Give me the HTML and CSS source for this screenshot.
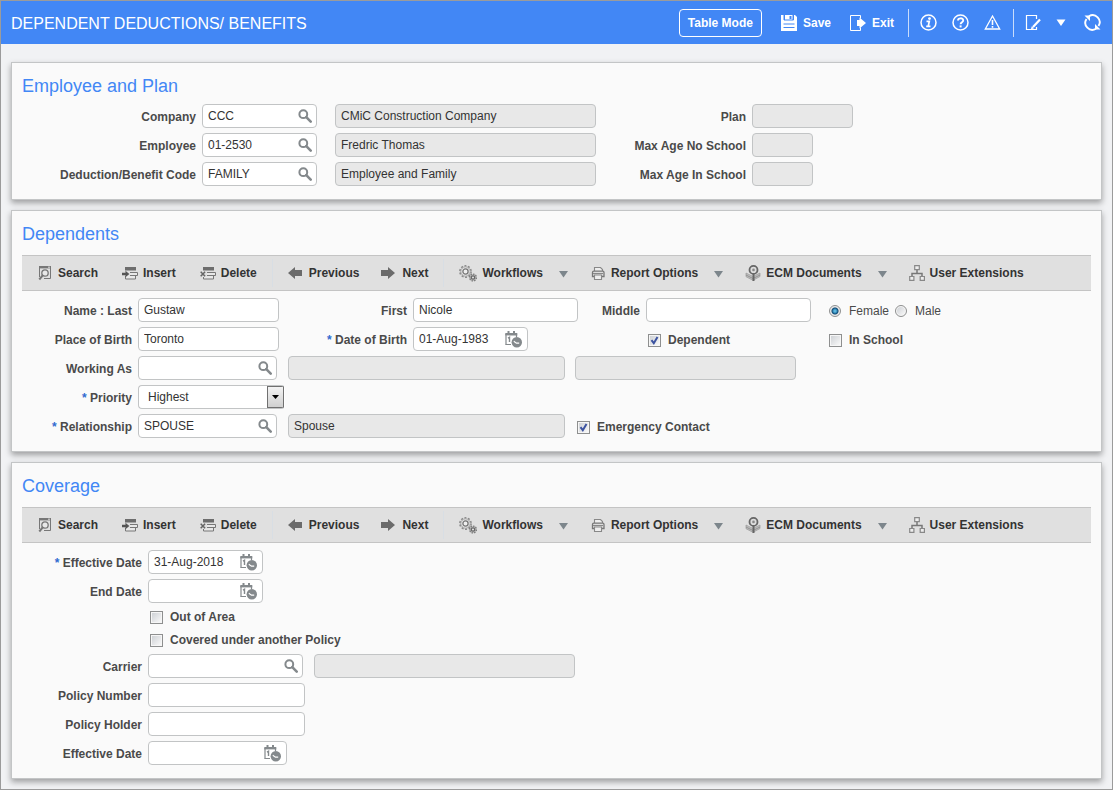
FILE: index.html
```html
<!DOCTYPE html>
<html lang="en">
<head>
<meta charset="utf-8">
<title>Dependent Deductions/ Benefits</title>
<link rel="stylesheet" href="styles.css">
</head>
<body>
<svg class="sprite" aria-hidden="true">
  <symbol id="i-lens" viewBox="0 0 14 14"><circle cx="5.3" cy="5.2" r="3.9" fill="none" stroke="#84898c" stroke-width="2"/><path d="M8.3 8.2l4.4 4.4" stroke="#84898c" stroke-width="2.6" stroke-linecap="round"/></symbol>
  <symbol id="i-cal" viewBox="0 0 17 17"><path d="M1 13.5V3M.3 13.500h5.700M11.500 3v3" fill="none" stroke="#84898c" stroke-width="1.2"/><path d="M0.3 2h12v2.4h-12z" fill="#84898c"/><path d="M2.5 0h2v3h-2zM8 0h2v3H8z" fill="#84898c"/><path d="M3 7.200l1.500-.9v4.700" fill="none" stroke="#84898c" stroke-width="1.4"/><circle cx="11.8" cy="11.3" r="5.2" fill="#84898c"/><path d="M8.8 10.2l2.6 1.9 2.800 0" fill="none" stroke="#fff" stroke-width="1.1"/></symbol>
  <symbol id="i-search" viewBox="0 0 16 16"><path d="M2.500 12V1.500h11v12H7" fill="none" stroke="#777" stroke-width="1"/><path d="M2 1h12v2.4H2z" fill="#777"/><path d="M11 2.200h2" stroke="#ddd"/><circle cx="8" cy="8" r="3.2" fill="#e8e8e8" stroke="#777" stroke-width="1.3"/><path d="M5.700 10.4L2.300 14.500" stroke="#777" stroke-width="2"/></symbol>
  <symbol id="i-insert" viewBox="0 0 16 16"><path d="M3 2h11v3.5H3z" fill="#6d6d6d"/><path d="M8 7.5h7.5v3H8M3.500 11v3h10v-3" fill="#e8e8e8" stroke="#777"/><path d="M0 7.8h3.5V5.8L7.3 9l-3.8 3.2v-2H0z" fill="#555"/></symbol>
  <symbol id="i-delete" viewBox="0 0 16 16"><path d="M3 2h11v3.5H3z" fill="#6d6d6d"/><path d="M7 7.5h8.5v3H7M3.500 12v2h10v-3.500" fill="#e8e8e8" stroke="#777"/><path d="M.7 6.7l4.4 4.6M5.1 6.7L.7 11.3" stroke="#666" stroke-width="1.5"/></symbol>
  <symbol id="i-prev" viewBox="0 0 16 16"><path d="M0 8l7-6v3h7v6H7v3z" fill="#6b6b6b"/></symbol>
  <symbol id="i-next" viewBox="0 0 16 16"><path d="M14 8L7 2v3H0v6h7v3z" fill="#6b6b6b"/></symbol>
  <symbol id="i-gears" viewBox="0 0 18 17"><circle cx="6.5" cy="6.5" r="5.6" fill="none" stroke="#8a8a8a" stroke-width="1.6" stroke-dasharray="2 1.52"/><circle cx="6.5" cy="6.5" r="4.7" fill="#e4e4e4" stroke="#999" stroke-width=".8"/><circle cx="6.5" cy="6.5" r="2.6" fill="#eee" stroke="#777" stroke-width="1.3"/><circle cx="14" cy="12.5" r="3.4" fill="#bbb" stroke="#7d7d7d" stroke-width="1.4" stroke-dasharray="1.5 1.1"/><circle cx="14" cy="12.5" r="1.7" fill="#ddd" stroke="#666" stroke-width="1.2"/></symbol>
  <symbol id="i-print" viewBox="0 0 16 16"><path d="M4.500 6V2.500h6l2 2V6" fill="#eee" stroke="#888" stroke-width="1.1"/><path d="M4 11.500H2.500v-4q0-1.300 1.300-1.300h8.900q1.300 0 1.300 1.300v4h-2" fill="#ddd" stroke="#777" stroke-width="1.3"/><path d="M4.500 10h7v4.500h-7z" fill="#eee" stroke="#888" stroke-width="1.1"/><path d="M3 8.500h10" stroke="#888"/></symbol>
  <symbol id="i-ecm" viewBox="0 0 16 16"><path d="M1 8l5 2.500 2 1 7-3.500v3.500l-7 3.800-7-3.600z" fill="#bdbdbd" stroke="#999" stroke-width=".7"/><path d="M1 10l7 3.500 7-3.500" fill="none" stroke="#888" stroke-width=".8"/><circle cx="8.500" cy="4.900" r="4" fill="#ddd" stroke="#666" stroke-width="1.800"/><circle cx="8.500" cy="4.900" r="1.300" fill="#888"/><path d="M8.500 9v7" stroke="#666" stroke-width="2"/></symbol>
  <symbol id="i-users" viewBox="0 0 16 16"><path d="M8 5v3M3 11.500V8.500h10v3" fill="none" stroke="#777" stroke-width="1.5"/><path d="M5.700.700h4.600v4H5.700zM.700 11.500h4.200v3.800H.700zM11.200 11.500h4.200v3.800h-4.200z" fill="#eee" stroke="#888" stroke-width="1.200"/></symbol>
  <symbol id="i-down" viewBox="0 0 11 8"><path d="M1 1h9L5.500 7.500z" fill="#7d868c"/></symbol>
</svg>

<header class="topbar">
  <h1 class="page-title">DEPENDENT DEDUCTIONS/ BENEFITS</h1>
  <div class="actions">
    <button class="mode" type="button">Table Mode</button>
    <button class="action" type="button"><svg width="16" height="16"><path d="M0 0h14l2 2v14H0z" fill="#fff"/><path d="M3 0h9.500v5H3zM2.500 9h11M2.500 12.500h11" fill="#4287f5" stroke="#4287f5"/><path d="M4 0h7.500v4.500H4z" fill="#fff"/><path d="M8.500 1h2v3h-2z" fill="#4287f5"/></svg>Save</button>
    <button class="action" type="button"><svg width="16" height="16"><path d="M10.500 3.500v-3H.500v15h10v-3" fill="none" stroke="#fff"/><path d="M7 5h2.500V2.500L16 8l-6.500 5.500V11H7z" fill="#fff"/></svg>Exit</button>
  </div>
  <div class="actions tools">
    <button class="tool" type="button" aria-label="Information"><svg width="17" height="17"><circle cx="8.500" cy="8.500" r="7.500" fill="none" stroke="#fff" stroke-width="1.500"/><circle cx="9.500" cy="4.600" r="1.400" fill="#fff"/><path d="M6.500 7.300h2.800l-1.100 5h2.300M6.200 12.300h3" fill="none" stroke="#fff" stroke-width="1.700"/></svg></button>
    <button class="tool" type="button" aria-label="Help"><svg width="17" height="17"><circle cx="8.500" cy="8.500" r="7.500" fill="none" stroke="#fff" stroke-width="1.500"/><path d="M6 6.600c0-3 5.200-3 5.200-.2 0 1.800-2.600 1.800-2.600 3.800" fill="none" stroke="#fff" stroke-width="1.900"/><path d="M7.600 11.400h2v2h-2z" fill="#fff"/></svg></button>
    <button class="tool" type="button" aria-label="Warnings"><svg width="17" height="17"><path d="M8.500 2L15.700 15H1.300z" fill="none" stroke="#fff" stroke-width="1.300"/><path d="M8.500 6v5M8.500 12v1.700" stroke="#fff" stroke-width="1.600"/></svg></button>
  </div>
  <div class="actions tools">
    <button class="tool" type="button" aria-label="Edit"><svg width="16" height="17"><path d="M11.500 5V1.500h-10v14h10V13" fill="none" stroke="#fff" stroke-width="1.200"/><path d="M15 5.500L8 13" stroke="#fff" stroke-width="2.200"/><path d="M5.800 15.500l1-3.200 2.200 2z" fill="#fff"/></svg></button>
    <button class="tool" type="button" aria-label="Edit options"><svg width="10" height="7"><path d="M.500.500h9L5 7z" fill="#fff"/></svg></button>
    <button class="tool refresh" type="button" aria-label="Refresh"><svg width="17" height="17"><path d="M5 2.200A7 7 0 0 1 14.500 12M12 14.800A7 7 0 0 1 2.500 5" fill="none" stroke="#fff" stroke-width="1.900"/><path d="M.500 1.500h5.500v5.500zM16.500 15.500H11V10z" fill="#fff"/></svg></button>
  </div>
</header>

<main class="content">
  <section class="card">
    <h2 class="card-title">Employee and Plan</h2>
    <div class="form form-plan">
      <label for="company">Company</label>
      <span class="field w115"><input id="company" value="CCC"><button type="button" aria-label="Look up company"><svg width="14" height="14"><use href="#i-lens"/></svg></button></span>
      <input class="box" readonly aria-label="Company name" value="CMiC Construction Company">
      <label for="plan">Plan</label>
      <input class="box w101" id="plan" readonly>

      <label for="employee">Employee</label>
      <span class="field w115"><input id="employee" value="01-2530"><button type="button" aria-label="Look up employee"><svg width="14" height="14"><use href="#i-lens"/></svg></button></span>
      <input class="box" readonly aria-label="Employee name" value="Fredric Thomas">
      <label for="noschool">Max Age No School</label>
      <input class="box w61" id="noschool" readonly>

      <label for="code">Deduction/Benefit Code</label>
      <span class="field w115"><input id="code" value="FAMILY"><button type="button" aria-label="Look up code"><svg width="14" height="14"><use href="#i-lens"/></svg></button></span>
      <input class="box" readonly aria-label="Code description" value="Employee and Family">
      <label for="inschoolage">Max Age In School</label>
      <input class="box w61" id="inschoolage" readonly>
    </div>
  </section>

  <section class="card">
    <h2 class="card-title">Dependents</h2>
    <div class="toolbar">
      <div class="group records">
        <button type="button"><svg width="16" height="16"><use href="#i-search"/></svg>Search</button>
        <button type="button"><svg width="16" height="16"><use href="#i-insert"/></svg>Insert</button>
        <button type="button"><svg width="16" height="16"><use href="#i-delete"/></svg>Delete</button>
      </div>
      <div class="group">
        <button type="button"><svg width="16" height="16"><use href="#i-prev"/></svg>Previous</button>
        <button type="button"><svg width="16" height="16"><use href="#i-next"/></svg>Next</button>
      </div>
      <div class="group menus">
        <button type="button"><svg width="18" height="17"><use href="#i-gears"/></svg>Workflows<svg class="caret" width="11" height="8"><use href="#i-down"/></svg></button>
        <button type="button"><svg width="16" height="16"><use href="#i-print"/></svg>Report Options<svg class="caret" width="11" height="8"><use href="#i-down"/></svg></button>
        <button type="button"><svg width="16" height="16"><use href="#i-ecm"/></svg>ECM Documents<svg class="caret" width="11" height="8"><use href="#i-down"/></svg></button>
        <button type="button"><svg width="16" height="16"><use href="#i-users"/></svg>User Extensions</button>
      </div>
    </div>
    <div class="form form-person">
      <label for="last">Name : Last</label>
      <input class="box" id="last" value="Gustaw">
      <label for="first">First</label>
      <input class="box" id="first" value="Nicole">
      <label for="middle">Middle</label>
      <input class="box" id="middle">
      <span class="choices">
        <label class="choice plain"><input type="radio" name="sex" checked>Female</label>
        <label class="choice plain"><input type="radio" name="sex">Male</label>
      </span>

      <label for="birthplace">Place of Birth</label>
      <input class="box" id="birthplace" value="Toronto">
      <label for="dob"><span class="req">*</span> Date of Birth</label>
      <span class="field date w115"><input id="dob" value="01-Aug-1983"><button type="button" aria-label="Pick date of birth"><svg width="17" height="17"><use href="#i-cal"/></svg></button></span>
      <label class="choice dependent"><input type="checkbox" checked>Dependent</label>
      <span class="choices"><label class="choice"><input type="checkbox">In School</label></span>
    </div>
    <div class="form form-relation">
      <label for="working">Working As</label>
      <span class="field w139"><input id="working"><button type="button" aria-label="Look up occupation"><svg width="14" height="14"><use href="#i-lens"/></svg></button></span>
      <input class="box" readonly aria-label="Occupation description">
      <span class="trail"><input class="box w221" readonly aria-label="Occupation detail"></span>

      <label for="priority"><span class="req">*</span> Priority</label>
      <select class="pick" id="priority"><option>Highest</option></select>

      <label for="relationship"><span class="req">*</span> Relationship</label>
      <span class="field w139"><input id="relationship" value="SPOUSE"><button type="button" aria-label="Look up relationship"><svg width="14" height="14"><use href="#i-lens"/></svg></button></span>
      <input class="box" readonly aria-label="Relationship description" value="Spouse">
      <span class="trail"><label class="choice"><input type="checkbox" checked>Emergency Contact</label></span>
    </div>
  </section>

  <section class="card">
    <h2 class="card-title">Coverage</h2>
    <div class="toolbar">
      <div class="group records">
        <button type="button"><svg width="16" height="16"><use href="#i-search"/></svg>Search</button>
        <button type="button"><svg width="16" height="16"><use href="#i-insert"/></svg>Insert</button>
        <button type="button"><svg width="16" height="16"><use href="#i-delete"/></svg>Delete</button>
      </div>
      <div class="group">
        <button type="button"><svg width="16" height="16"><use href="#i-prev"/></svg>Previous</button>
        <button type="button"><svg width="16" height="16"><use href="#i-next"/></svg>Next</button>
      </div>
      <div class="group menus">
        <button type="button"><svg width="18" height="17"><use href="#i-gears"/></svg>Workflows<svg class="caret" width="11" height="8"><use href="#i-down"/></svg></button>
        <button type="button"><svg width="16" height="16"><use href="#i-print"/></svg>Report Options<svg class="caret" width="11" height="8"><use href="#i-down"/></svg></button>
        <button type="button"><svg width="16" height="16"><use href="#i-ecm"/></svg>ECM Documents<svg class="caret" width="11" height="8"><use href="#i-down"/></svg></button>
        <button type="button"><svg width="16" height="16"><use href="#i-users"/></svg>User Extensions</button>
      </div>
    </div>
    <div class="form form-coverage">
      <label for="effective"><span class="req">*</span> Effective Date</label>
      <span class="field date w115"><input id="effective" value="31-Aug-2018"><button type="button" aria-label="Pick effective date"><svg width="17" height="17"><use href="#i-cal"/></svg></button></span>

      <label for="end">End Date</label>
      <span class="field date w115"><input id="end"><button type="button" aria-label="Pick end date"><svg width="17" height="17"><use href="#i-cal"/></svg></button></span>

      <label class="choice short"><input type="checkbox">Out of Area</label>
      <label class="choice short"><input type="checkbox">Covered under another Policy</label>

      <label for="carrier">Carrier</label>
      <span class="field w155"><input id="carrier"><button type="button" aria-label="Look up carrier"><svg width="14" height="14"><use href="#i-lens"/></svg></button></span>
      <input class="box w261" readonly aria-label="Carrier name">

      <label for="number">Policy Number</label>
      <input class="box w157" id="number">

      <label for="holder">Policy Holder</label>
      <input class="box w157" id="holder">

      <label for="policydate">Effective Date</label>
      <span class="field date w139"><input id="policydate"><button type="button" aria-label="Pick policy effective date"><svg width="17" height="17"><use href="#i-cal"/></svg></button></span>
    </div>
  </section>
</main>
</body>
</html>
```

FILE: styles.css
```css
* { box-sizing: border-box; }

body {
  margin: 0;
  min-height: 100vh;
  border: 1px solid #9b9b9b;
  background: #f1f2f4;
  color: #333;
  font: 12px/14px "Liberation Sans", Arial, sans-serif;
}

.sprite { position: absolute; width: 0; height: 0; }

svg { display: block; flex: none; }

button, input, select { font: inherit; color: inherit; }

button {
  display: flex;
  align-items: center;
  padding: 0;
  border: 0;
  background: none;
  cursor: pointer;
}

/* Header */
.topbar {
  display: flex;
  align-items: center;
  height: 43px;
  padding: 0 11px 0 10px;
  background: #4287f5;
  color: #fff;
}

.page-title {
  flex: 1;
  margin: 0;
  padding-top: 2px;
  font-size: 16px;
  line-height: 20px;
  font-weight: normal;
}

.actions { display: flex; align-items: center; gap: 19px; font-weight: bold; }

.action { gap: 6px; }

.mode {
  height: 28px;
  padding: 0 8px;
  border: 1px solid #fff;
  border-radius: 4px;
}

.tools {
  gap: 15px;
  height: 28px;
  margin-left: 14px;
  padding-left: 11px;
  border-left: 1px solid #c9dcfb;
}

.tools + .tools { margin-left: 12px; }

.refresh { margin-left: 3px; }

/* Cards */
.content {
  display: flex;
  flex-direction: column;
  gap: 10px;
  padding: 18px 10px 10px;
}

.card {
  padding: 12px 10px 13px;
  border: 1px solid #c3c5c6;
  background: #fafafa;
  box-shadow: 0 3px 6px rgba(0, 0, 0, 0.35);
}

.card-title {
  margin: 0;
  padding-bottom: 7px;
  color: #4287f5;
  font-size: 18px;
  line-height: 22px;
  font-weight: normal;
}

/* Toolbars */
.toolbar {
  display: flex;
  align-items: center;
  height: 36px;
  margin: 3px 0 7px;
  padding-left: 15px;
  border: 1px solid #c4c4c4;
  border-width: 1px 0;
  background: #e0e0e0;
}

.group { display: flex; align-items: center; gap: 22px; height: 28px; }

.records { gap: 24px; }

.menus { gap: 21px; }

.group + .group {
  margin-left: 15px;
  padding-left: 15px;
  border-left: 1px solid #d8dee4;
}

.toolbar button { gap: 5px; font-weight: bold; white-space: nowrap; }

.caret { margin-left: 10px; margin-top: 2px; }

/* Forms */
.form { display: grid; gap: 5px 6px; justify-content: start; }

.form-plan { grid-template-columns: 174px 127px 261px 144px auto; }
.form-person { grid-template-columns: 110px 141px 122px 165px 56px 165px auto; }
.form-relation { grid-template-columns: 110px 144px 277px auto; margin-top: 5px; }
.form-coverage { grid-template-columns: 120px 160px auto; }
.form-coverage > label { grid-column: 1; }

.form label {
  padding-top: 2px;
  color: #4a4a4a;
  font-weight: bold;
  line-height: 22px;
  text-align: right;
  white-space: nowrap;
}

.form .req { color: #2f6bd0; }

.box, .field, .pick {
  width: 100%;
  height: 24px;
  border: 1px solid #c2c4c5;
  border-radius: 4px;
  background: #fff;
}

.box { padding: 0 5px 1px; }

.box:read-only { background: #e8e8e8; }

.field { display: flex; align-items: center; padding-right: 4px; }

.field.date { padding-right: 5px; }

.field input {
  flex: 1;
  min-width: 0;
  height: 22px;
  padding: 0 0 1px 5px;
  border: 0;
  background: none;
}

.form .w61 { width: 61px; }
.form .w101 { width: 101px; }
.form .w115 { width: 115px; }
.form .w139 { width: 139px; }
.form .w155 { width: 155px; }
.form .w157 { width: 157px; }
.form .w221 { width: 221px; }
.form .w261 { width: 261px; }

.pick {
  grid-column: 2 / -1;
  width: 147px;
  padding: 0 20px 1px 9px;
  appearance: none;
  background: #fff url("data:image/svg+xml,%3Csvg xmlns='http://www.w3.org/2000/svg' width='18' height='22'%3E%3ClinearGradient id='g' x2='0' y2='1'%3E%3Cstop stop-color='%23f4f4f4'/%3E%3Cstop offset='1' stop-color='%23cfcfcf'/%3E%3C/linearGradient%3E%3Crect x='.5' y='.5' width='16' height='21' fill='url(%23g)' stroke='%23707070'/%3E%3Cpath d='M5 9h7l-3.500 4z'/%3E%3C/svg%3E") no-repeat right center;
  background-origin: border-box;
  background-clip: border-box;
  border-right-color: transparent;
}

/* Tick boxes and radios */
.choices { display: flex; gap: 6px; padding-left: 12px; }

.trail { padding-left: 4px; }

.form .choice {
  display: flex;
  align-items: center;
  gap: 7px;
  height: 24px;
  padding-left: 2px;
  text-align: left;
}

.form .choices .choice { padding-left: 0; }

.form .plain { gap: 8px; font-weight: normal; }

.form .dependent { grid-column: 6; }

.form .short { grid-column: 2 / -1; height: 18px; padding-top: 0; }

.choice input {
  flex: none;
  width: 13px;
  height: 13px;
  margin: 0;
  appearance: none;
  border: 1px solid #8e8f8f;
  background: linear-gradient(135deg, #cfd2d6, #f8f8f8) content-box, #f6f6f6;
  padding: 1px;
}

.choice input[type="checkbox"]:checked {
  background: url("data:image/svg+xml,%3Csvg xmlns='http://www.w3.org/2000/svg' width='11' height='11'%3E%3Cpath d='M2.500 5.200l2.300 3L8.500 2' fill='none' stroke='%233c53a0' stroke-width='2'/%3E%3C/svg%3E") border-box center no-repeat, linear-gradient(135deg, #cfd2d6, #f8f8f8) content-box, #f6f6f6;
}

.choice input[type="radio"] { width: 12px; height: 12px; border-radius: 50%; }

.choice input[type="radio"]:checked {
  background: radial-gradient(circle at 50% 50%, #59b6df 0 1px, #0d4f7d 3px, #123a5c 3px, #e8eaec 4px);
}
```
